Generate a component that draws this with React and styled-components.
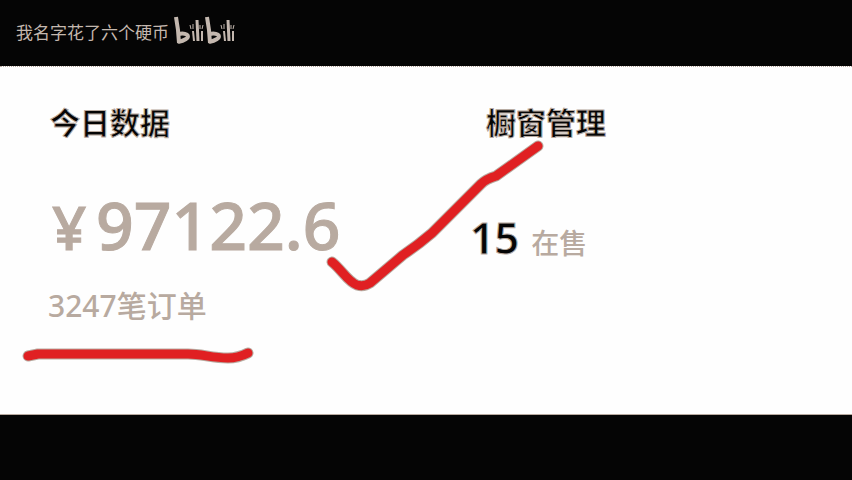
import React from "react";
import styled, { createGlobalStyle } from "styled-components";

const taupe = "#b8aaa0";
const ink = "#050505";
const red = "#e02022";

const GlobalStyle = createGlobalStyle`
  body {
    margin: 0;
    background: ${ink};
    font-family: "Noto Sans", "Noto Sans CJK SC", sans-serif;
  }
`;

const Page = styled.div`
  min-height: 100vh;
  display: flex;
  flex-direction: column;
`;

const Header = styled.header`
  height: 66px;
  box-sizing: border-box;
  padding-left: 16px;
  display: flex;
  align-items: center;
  gap: 4px;
`;

const Author = styled.span`
  color: #c4b8af;
  font-size: 17px;
  line-height: 24px;
`;

const Logo = styled.svg`
  width: 64px;
  height: 30px;
  margin-bottom: 6px;
  fill: none;
  stroke: #c4b8af;
  stroke-linejoin: round;
`;

const Board = styled.main`
  position: relative;
  box-sizing: border-box;
  padding: 32px 48px 86px;
  display: grid;
  grid-template-columns: 424px 1fr;
  align-content: start;
  background: #fefefe;
  border-top: 1px dotted ${taupe};
  border-bottom: 1px solid ${taupe};
`;

const Panel = styled.section`
  display: flex;
  flex-direction: column;
  align-items: flex-start;
`;

const Title = styled.h2`
  margin: 0;
  padding-left: ${(p) => p.$indent}px;
  font-family: "Noto Sans CJK SC", sans-serif;
  font-size: 30px;
  font-weight: 700;
  line-height: 44px;
  color: ${ink};
  -webkit-text-stroke: 1px ${taupe};
`;

const Amount = styled.div`
  margin-top: 36px;
  display: flex;
  align-items: baseline;
  color: ${taupe};
  font-size: 66px;
  font-weight: 500;
  line-height: 90px;
  -webkit-text-stroke: 1px ${taupe};
`;

const Currency = styled.span`
  width: 48px;
  box-sizing: border-box;
  padding-left: 4px;
  font-size: 60px;
`;

const Orders = styled.div`
  margin-top: 12px;
  color: ${taupe};
  font-size: 30px;
  font-weight: 500;
  line-height: 44px;
`;

const Stock = styled.div`
  margin-top: 65px;
  margin-left: -2px;
  display: flex;
  align-items: baseline;
  gap: 12px;
  line-height: 60px;
`;

const Count = styled.strong`
  color: ${ink};
  font-size: 43px;
  font-weight: 600;
  -webkit-text-stroke: 1px ${taupe};
`;

const Status = styled.span`
  color: ${taupe};
  font-size: 28px;
  font-weight: 500;
`;

const Marks = styled.svg`
  position: absolute;
  top: 0;
  left: 0;
  width: 852px;
  height: 347px;
  pointer-events: none;
  fill: none;
  stroke-linecap: round;
  stroke-linejoin: round;
`;

const strokes = [
  "M332 195 C342 203 348 215 357 218 Q364 220 370 216 L403 188 Q418 178 432 166 L481 117 Q486 112 496 109 L538 79",
  "M28 289 L38 287 H188 C202 287 212 291 228 291 Q238 291 248 286",
];

function BilibiliLogo() {
  return (
    <Logo viewBox="0 0 64 30" role="img" aria-label="bilibili">
      {[0, 31].map((x) => (
        <g key={x} transform={`translate(${x} 0)`}>
          <path strokeWidth="4" d="M3 2 L5 15 L6 28" />
          <path strokeWidth="4" d="M5 19 C13 17 18 21 13 24 Q10 26 5 27" />
          <path strokeWidth="2" d="M20 16 L21 26" />
          <path strokeWidth="3" d="M24 5 L25 26" />
          <path strokeWidth="2" d="M29 16 L29 26" />
          <path strokeWidth="1" d="M17 10 L18 14 M20 9 V14 M27 10 V14 M30 10 L29 14" />
        </g>
      ))}
    </Logo>
  );
}

export default function App() {
  return (
    <>
      <GlobalStyle />
      <Page>
        <Header>
          <Author>我名字花了六个硬币</Author>
          <BilibiliLogo />
        </Header>
        <Board>
          <Panel>
            <Title $indent={2}>今日数据</Title>
            <Amount>
              <Currency>¥</Currency>
              <span>97122.6</span>
            </Amount>
            <Orders>3247笔订单</Orders>
          </Panel>
          <Panel>
            <Title $indent={14}>橱窗管理</Title>
            <Stock>
              <Count>15</Count>
              <Status>在售</Status>
            </Stock>
          </Panel>
          <Marks viewBox="0 0 852 347" aria-hidden="true">
            {strokes.map((d) => (
              <g key={d}>
                <path d={d} stroke={taupe} strokeWidth="11" />
                <path d={d} stroke={red} strokeWidth="9" />
              </g>
            ))}
          </Marks>
        </Board>
      </Page>
    </>
  );
}
